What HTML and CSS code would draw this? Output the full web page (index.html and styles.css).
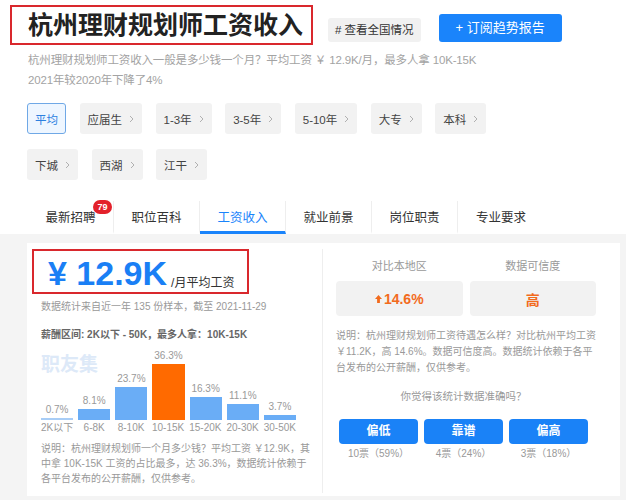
FILE: index.html
```html
<!DOCTYPE html>
<html lang="zh-CN">
<head>
<meta charset="utf-8">
<title>杭州理财规划师工资收入</title>
<link rel="stylesheet" href="styles.css">
</head>
<body>
<div class="page">
  <header class="head">
    <h1 class="title">杭州理财规划师工资收入</h1>
    <a class="btn-gray"># 查看全国情况</a>
    <a class="btn-blue">+ 订阅趋势报告</a>
  </header>
  <p class="sub">杭州理财规划师工资收入一般是多少钱一个月？平均工资 ￥ 12.9K/月，最多人拿 10K-15K<br>2021年较2020年下降了4%</p>
  <div class="chips">
    <span class="chip active">平均</span>
    <span class="chip">应届生<svg class="chev" width="5" height="8" viewBox="0 0 5 8"><path d="M1 1l3 3-3 3"/></svg></span>
    <span class="chip">1-3年<svg class="chev" width="5" height="8" viewBox="0 0 5 8"><path d="M1 1l3 3-3 3"/></svg></span>
    <span class="chip">3-5年<svg class="chev" width="5" height="8" viewBox="0 0 5 8"><path d="M1 1l3 3-3 3"/></svg></span>
    <span class="chip">5-10年<svg class="chev" width="5" height="8" viewBox="0 0 5 8"><path d="M1 1l3 3-3 3"/></svg></span>
    <span class="chip">大专<svg class="chev" width="5" height="8" viewBox="0 0 5 8"><path d="M1 1l3 3-3 3"/></svg></span>
    <span class="chip">本科<svg class="chev" width="5" height="8" viewBox="0 0 5 8"><path d="M1 1l3 3-3 3"/></svg></span>
  </div>
  <div class="chips chips2">
    <span class="chip">下城<svg class="chev" width="5" height="8" viewBox="0 0 5 8"><path d="M1 1l3 3-3 3"/></svg></span>
    <span class="chip">西湖<svg class="chev" width="5" height="8" viewBox="0 0 5 8"><path d="M1 1l3 3-3 3"/></svg></span>
    <span class="chip">江干<svg class="chev" width="5" height="8" viewBox="0 0 5 8"><path d="M1 1l3 3-3 3"/></svg></span>
  </div>
  <nav class="tabs">
    <span class="tab">最新招聘<i class="badge">79</i></span>
    <span class="tab">职位百科</span>
    <span class="tab on">工资收入</span>
    <span class="tab">就业前景</span>
    <span class="tab">岗位职责</span>
    <span class="tab last">专业要求</span>
  </nav>
</div>
<section class="band">
  <div class="card">
    <div class="left">
      <div class="price">¥ 12.9K<span class="unit">/月平均工资</span></div>
      <p class="note">数据统计来自近一年 135 份样本，截至 2021-11-29</p>
      <p class="range">薪酬区间: 2K以下 - 50K，最多人拿：10K-15K</p>
      <div class="chart">
        <div class="mark">职友集</div>
        <div class="bars">
          <div class="col"><span class="pct">0.7%</span><span class="bar thin" style="height:2px"></span></div>
          <div class="col"><span class="pct">8.1%</span><span class="bar" style="height:11px"></span></div>
          <div class="col"><span class="pct">23.7%</span><span class="bar" style="height:33px"></span></div>
          <div class="col"><span class="pct">36.3%</span><span class="bar hot" style="height:56px"></span></div>
          <div class="col"><span class="pct">16.3%</span><span class="bar" style="height:23px"></span></div>
          <div class="col"><span class="pct">11.1%</span><span class="bar" style="height:16px"></span></div>
          <div class="col"><span class="pct">3.7%</span><span class="bar" style="height:5px"></span></div>
        </div>
        <div class="xl">
          <span>2K以下</span><span>6-8K</span><span>8-10K</span><span>10-15K</span><span>15-20K</span><span>20-30K</span><span>30-50K</span>
        </div>
      </div>
      <p class="exp">说明：杭州理财规划师一个月多少钱？平均工资 ￥12.9K，其<br>中拿 10K-15K 工资的占比最多，达 36.3%，数据统计依赖于<br>各平台发布的公开薪酬，仅供参考。</p>
    </div>
    <div class="right">
      <div class="cmp">
        <div class="cmp-t">对比本地区</div>
        <div class="cmp-t">数据可信度</div>
        <div class="cmp-v"><svg class="up" width="7" height="8" viewBox="0 0 8 9"><path d="M4 0L8 4.5H5.6V9H2.4V4.5H0Z"/></svg>14.6%</div>
        <div class="cmp-v">高</div>
      </div>
      <p class="rexp">说明：杭州理财规划师工资待遇怎么样？对比杭州平均工资<br>￥11.2K，高 14.6%。数据可信度高。数据统计依赖于各平<br>台发布的公开薪酬，仅供参考。</p>
      <p class="q">你觉得该统计数据准确吗？</p>
      <div class="votes">
        <div class="vote"><span class="vbtn">偏低</span><span class="vcnt">10票（59%）</span></div>
        <div class="vote"><span class="vbtn">靠谱</span><span class="vcnt">4票（24%）</span></div>
        <div class="vote"><span class="vbtn">偏高</span><span class="vcnt">3票（18%）</span></div>
      </div>
    </div>
  </div>
</section>
</body>
</html>
```
FILE: styles.css
```css
* { box-sizing: border-box; margin: 0; padding: 0; }
body {
  margin: 0;
  width: 626px;
  height: 500px;
  overflow: hidden;
  background: #fff;
  font-family: "Liberation Sans", "Noto Sans CJK SC", sans-serif;
  color: #333;
}
.page { padding: 5px 0 0 27px; }
.head { display: flex; align-items: flex-end; }
.title {
  margin-left: -17px;
  height: 40px;
  border: 2px solid #d9282d;
  padding: 0 8px 0 16px;
  font-size: 25px;
  font-weight: 700;
  line-height: 36px;
  color: #222;
  white-space: nowrap;
}
.btn-gray {
  margin: 0 0 3px 15px;
  height: 24px;
  padding: 0 7px;
  background: #f1f1f1;
  border-radius: 3px;
  font-size: 11.5px;
  line-height: 24px;
  color: #333;
}
.btn-blue {
  margin: 0 0 3px 18px;
  height: 28px;
  padding: 0 17px;
  background: #1a84fb;
  border-radius: 3px;
  font-size: 13px;
  line-height: 28px;
  color: #fff;
}
.sub {
  margin-top: 5px;
  padding-left: 1px;
  font-size: 11.5px;
  letter-spacing: -0.15px;
  line-height: 20px;
  color: #a3a3a3;
  white-space: nowrap;
}
.chips { display: flex; gap: 13.5px; margin-top: 13px; }
.chips2 { margin-top: 15px; }
.chip {
  height: 31px;
  display: flex;
  align-items: center;
  padding: 0 8px;
  background: #f2f2f2;
  border-radius: 3px;
  font-size: 11.5px;
  color: #444;
  white-space: nowrap;
}
.chip.active {
  padding: 0 7px;
  background: #eef6ff;
  border: 1px solid #6fa8e6;
  color: #2c80df;
}
.chev { margin-left: 7px; fill: none; stroke: #b0b0b0; stroke-width: 1; }
.tabs { display: flex; margin: 21px 0 0 1px; }
.tab {
  position: relative;
  width: 86px;
  height: 33px;
  padding-top: 4px;
  line-height: 26px;
  border-right: 1px solid #eee;
  border-bottom: 3px solid transparent;
  text-align: center;
  font-size: 12.5px;
  color: #333;
  white-space: nowrap;
}
.tab.last { border-right: 0; }
.tab.on { color: #1a84fb; border-bottom-color: #1a84fb; }
.badge {
  position: absolute;
  left: 65px;
  top: -1px;
  width: 19px;
  height: 14px;
  border-radius: 7px;
  background: #e3212b;
  color: #fff;
  font-style: normal;
  font-size: 9px;
  font-weight: 700;
  line-height: 14px;
  text-align: center;
}
.band {
  background: #f4f4f4;
  padding: 9px 6px 10px 27px;
}
.card {
  background: #fff;
  display: grid;
  grid-template-columns: 295px 298px;
}
.left { padding: 6px 14px 10px; }
.price {
  width: 217px;
  height: 45px;
  margin-left: -9px;
  border: 2px solid #d9282d;
  padding: 4px 0 0 14px;
  font-family: "Liberation Sans", Arial, sans-serif;
  font-size: 34px;
  font-weight: 700;
  line-height: 37px;
  color: #1a7ff5;
  white-space: nowrap;
}
.unit {
  margin-left: 4px;
  font-family: "Liberation Sans", "Noto Sans CJK SC", sans-serif;
  font-size: 12px;
  font-weight: 400;
  line-height: 12px;
  vertical-align: -2px;
  color: #333;
}
.note { margin-top: 5px; font-size: 10px; line-height: 15px; color: #999; white-space: nowrap; }
.range { margin-top: 13px; font-size: 10px; font-weight: 700; line-height: 15px; color: #666; white-space: nowrap; }
.chart { position: relative; margin-top: 2px; width: 255px; }
.mark {
  position: absolute;
  left: 0;
  top: 11px;
  font-size: 19px;
  font-weight: 700;
  line-height: 19px;
  color: #dde9f8;
}
.bars {
  position: relative;
  display: grid;
  grid-template-columns: repeat(7, 1fr);
  column-gap: 5px;
  height: 76px;
  align-items: end;
}
.col { display: flex; flex-direction: column; align-items: center; }
.pct { font-size: 10px; line-height: 12px; color: #999; margin-bottom: 2px; }
.bar { display: block; width: 100%; background: #6aadf6; }
.bar.thin { background: #a8cdf6; }
.bar.hot { background: #ff6a00; }
.xl {
  display: grid;
  grid-template-columns: repeat(7, 1fr);
  column-gap: 5px;
  margin-top: 2px;
  font-size: 10px;
  line-height: 12px;
  color: #999;
  text-align: center;
  white-space: nowrap;
}
.exp { margin-top: 7px; font-size: 10px; line-height: 15px; color: #999; white-space: nowrap; }
.right {
  border-left: 1px solid #eee;
  margin: 6px 0 3px;
  padding: 9px 24px 0 13px;
}
.cmp { display: grid; grid-template-columns: 1fr 1fr; column-gap: 7px; row-gap: 7px; }
.cmp-t { text-align: center; font-size: 11px; line-height: 16px; color: #999; }
.cmp-v {
  height: 35px;
  display: flex;
  align-items: center;
  justify-content: center;
  gap: 2px;
  background: #f2f2f2;
  border-radius: 4px;
  color: #f26b1d;
  font-size: 14px;
  font-weight: 700;
}
.up { fill: #f26b1d; }
.rexp { margin-top: 12px; font-size: 10px; line-height: 16px; color: #999; white-space: nowrap; }
.q { margin-top: 12px; padding-right: 5px; text-align: center; font-size: 10.5px; line-height: 16px; color: #999; }
.votes { margin-top: 15px; padding-right: 5px; display: flex; justify-content: center; gap: 6px; }
.vote { width: 79px; display: flex; flex-direction: column; align-items: center; }
.vbtn {
  width: 79px;
  height: 25px;
  background: #1a82f7;
  border-radius: 4px;
  color: #fff;
  font-size: 12px;
  font-weight: 700;
  line-height: 25px;
  text-align: center;
}
.vcnt { margin-top: 3px; font-size: 10px; line-height: 14px; color: #999; white-space: nowrap; }
```
